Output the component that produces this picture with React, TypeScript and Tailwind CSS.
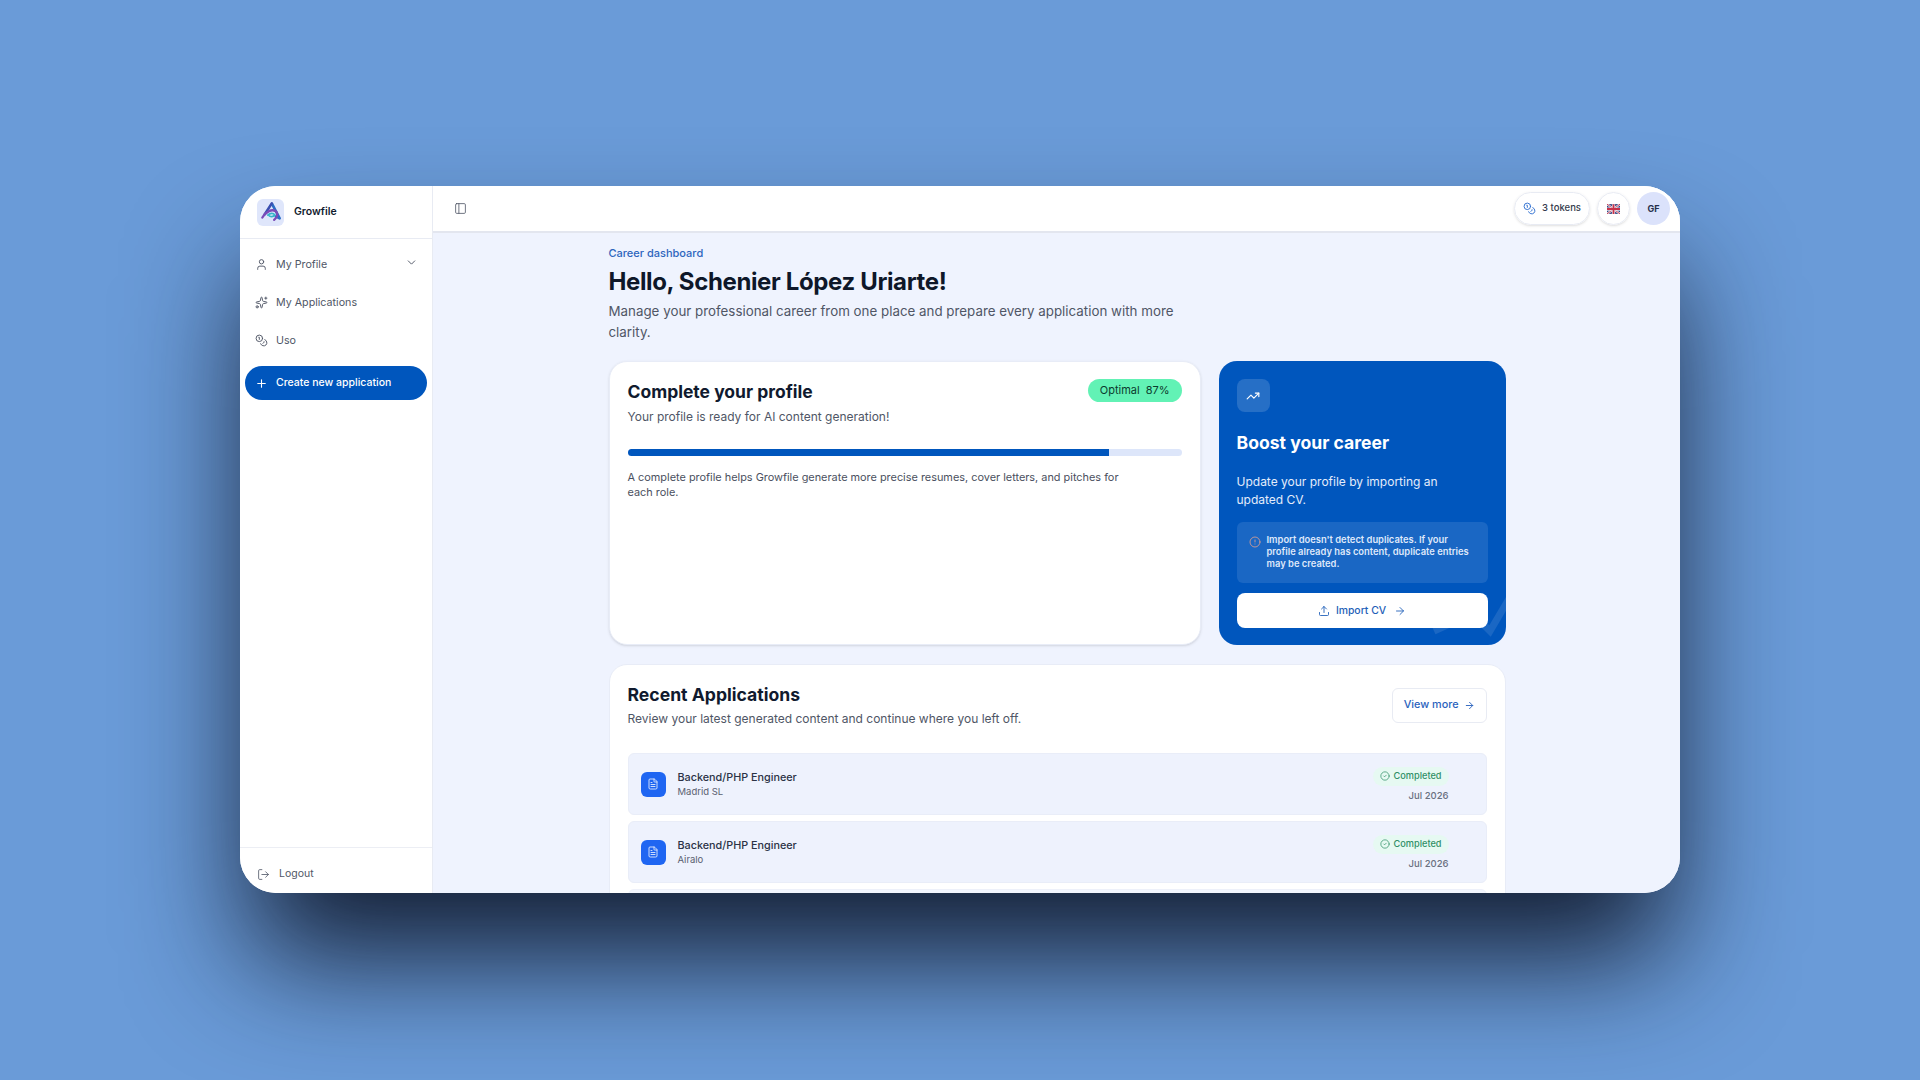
import { User, Sparkles, Coins, Plus, LogOut, ChevronDown, PanelLeft, TrendingUp, CircleAlert, Upload, ArrowRight, FileText, CircleCheck } from 'lucide-react';

const applications = [
  { role: 'Backend/PHP Engineer', company: 'Madrid SL', date: 'Jul 2026' },
  { role: 'Backend/PHP Engineer', company: 'Airalo', date: 'Jul 2026' },
];

function Logo() {
  return (
    <svg viewBox="0 0 28 28" className="w-[22px] h-[22px]" fill="none">
      <path d="M15 3 L25 22 L19 19" stroke="#2b6cc4" strokeWidth="3.4" strokeLinejoin="round" />
      <path d="M15 3 L6 17" stroke="#3a4fb0" strokeWidth="3.4" strokeLinecap="round" />
      <path d="M3 21 C8 13 15 10 20 13 C23 15 23 20 18 24" stroke="#7a4bb8" strokeWidth="3" strokeLinecap="round" />
      <path d="M10 18 C13 15 17 15 19 18 C17 20 14 20 12 19" stroke="#35b4c9" strokeWidth="2.2" strokeLinecap="round" />
    </svg>
  );
}

function UkFlag() {
  return (
    <svg viewBox="0 0 24 18" className="w-[13px] h-[10px]">
      <rect width="24" height="18" fill="#2b3f7e" />
      <path d="M0 0 L24 18 M24 0 L0 18" stroke="#e8e8f0" strokeWidth="4" />
      <path d="M0 0 L24 18 M24 0 L0 18" stroke="#c8324a" strokeWidth="1.6" />
      <path d="M12 0 V18 M0 9 H24" stroke="#e8e8f0" strokeWidth="6" />
      <path d="M12 0 V18 M0 9 H24" stroke="#c8324a" strokeWidth="3.4" />
    </svg>
  );
}

function Sidebar() {
  return (
    <aside className="w-[193px] shrink-0 bg-white border-r border-[#e8ebf3] flex flex-col">
      <div className="h-[53px] border-b border-[#e8ebf3] flex items-center pl-[17px] gap-[10px]">
        <div className="w-[27px] h-[27px] rounded-[6px] bg-[#dfe6fb] flex items-center justify-center">
          <Logo />
        </div>
        <span className="text-[10.5px] font-semibold text-[#111a2e]">Growfile</span>
      </div>
      <nav className="flex flex-col px-[5px] pt-[7px] text-[10.7px] text-[#4f5666]">
        <div className="relative h-[38px] flex items-center pl-[10px] gap-[8px]">
          <User className="w-[13px] h-[13px] -mt-[1px]" strokeWidth={1.75} />
          <span>My Profile</span>
          <ChevronDown className="absolute right-[9px] top-[10px] w-[13px] h-[13px]" strokeWidth={1.75} />
        </div>
        <div className="h-[38px] flex items-center pl-[10px] gap-[8px]">
          <Sparkles className="w-[13px] h-[13px] -mt-[1px]" strokeWidth={1.75} />
          <span>My Applications</span>
        </div>
        <div className="h-[38px] flex items-center pl-[10px] gap-[8px]">
          <Coins className="w-[13px] h-[13px] -mt-[1px]" strokeWidth={1.75} />
          <span>Uso</span>
        </div>
        <div className="mt-[6px] h-[34px] rounded-full bg-[#0056bd] text-white text-[10.5px] font-medium flex items-center pl-[10px] gap-[8px]">
          <Plus className="w-[13px] h-[13px]" strokeWidth={2} />
          <span>Create new application</span>
        </div>
      </nav>
      <div className="mt-auto h-[46px] pt-[7px] border-t border-[#eceef4] flex items-center pl-[17px] gap-[9px] text-[10.5px] text-[#4f5666]">
        <LogOut className="w-[13px] h-[13px]" strokeWidth={1.5} />
        <span>Logout</span>
      </div>
    </aside>
  );
}

function Topbar() {
  return (
    <header className="h-[47px] shrink-0 bg-white border-b-2 border-[#e3e6ef] flex items-center justify-between pl-[21px] pr-[10px]">
      <PanelLeft className="w-[13px] h-[13px] text-[#4f5666]" strokeWidth={1.5} />
      <div className="flex items-center gap-[7px]">
        <div className="h-[33px] rounded-full border border-[#e8ebf3] shadow-sm flex items-center px-[8px] gap-[6px] text-[9.5px] font-medium text-[#343b4c]">
          <Coins className="w-[13px] h-[13px] text-[#2f6fd0]" strokeWidth={1.75} />
          <span>3 tokens</span>
        </div>
        <div className="w-[33px] h-[33px] rounded-full border border-[#e8ebf3] shadow-sm flex items-center justify-center">
          <UkFlag />
        </div>
        <div className="w-[33px] h-[33px] rounded-full bg-[#dbe2fb] flex items-center justify-center text-[9px] font-bold text-[#27314d]">GF</div>
      </div>
    </header>
  );
}

function ProfileCard() {
  return (
    <section className="flex-1 h-[284px] rounded-[18px] bg-white border border-[#e8ecf7] shadow-sm px-[18px] pt-[18px]">
      <div className="flex items-start justify-between">
        <div>
          <h2 className="text-[17.5px] leading-[24px] font-bold text-[#101a2e]">Complete your profile</h2>
          <p className="mt-[4px] text-[12px] leading-[18px] text-[#4f5666]">Your profile is ready for AI content generation!</p>
        </div>
        <span className="h-[23px] mt-[-1px] rounded-full bg-[#62f2b5] px-[12px] flex items-center gap-[6px] text-[11px] text-[#0c3b2e]">
          <span>Optimal</span><span>87%</span>
        </span>
      </div>
      <div className="mt-[23px] h-[7px] rounded-full bg-[#dde6fa] overflow-hidden">
        <div className="h-full w-[87%] bg-[#0056bd]" />
      </div>
      <p className="mt-[14px] w-[510px] text-[10.9px] leading-[15px] text-[#4a5060]">
        A complete profile helps Growfile generate more precise resumes, cover letters, and pitches for each role.
      </p>
    </section>
  );
}

function BoostCard() {
  return (
    <section className="relative w-[287px] h-[284px] rounded-[18px] bg-[#0056bd] overflow-hidden px-[18px] pt-[18px] text-white">
      <svg viewBox="0 0 80 60" className="absolute right-[-6px] bottom-[2px] w-[80px] h-[60px] text-white/10" fill="none" stroke="currentColor" strokeWidth="7">
        <path d="M2 48 L24 38" />
        <path d="M48 38 L58 48 L78 14" />
      </svg>
      <div className="w-[33px] h-[33px] rounded-[8px] bg-white/15 flex items-center justify-center">
        <TrendingUp className="w-[14px] h-[14px]" strokeWidth={2} />
      </div>
      <h2 className="mt-[19px] text-[17.6px] leading-[24px] font-bold">Boost your career</h2>
      <p className="mt-[18px] text-[12px] leading-[18px] text-[#e4ecfb]">Update your profile by importing an updated CV.</p>
      <div className="mt-[13px] h-[61px] rounded-[6px] bg-white/10 flex gap-[6px] pl-[12px] pr-[10px] pt-[12px]">
        <CircleAlert className="w-[12px] h-[12px] mt-[2px] shrink-0 text-[#f0a58c]" strokeWidth={1.5} />
        <p className="text-[9.4px] leading-[12px] font-semibold text-[#dfe8fa]">Import doesn't detect duplicates. If your profile already has content, duplicate entries may be created.</p>
      </div>
      <button className="relative mt-[10px] w-full h-[35px] rounded-[8px] bg-white flex items-center justify-center gap-[6px] text-[10.4px] font-medium text-[#1f5fb8]">
        <Upload className="w-[12px] h-[12px]" strokeWidth={1.75} />
        <span>Import CV</span>
        <ArrowRight className="w-[12px] h-[12px] ml-[2px]" strokeWidth={1.75} />
      </button>
    </section>
  );
}

function RecentApplications() {
  return (
    <section className="mt-[19px] rounded-t-[18px] bg-white border border-[#e8ecf7] px-[18px] pt-[18px] pb-[18px]">
      <div className="flex items-start justify-between">
        <div>
          <h2 className="text-[17.6px] leading-[24px] font-bold text-[#101a2e]">Recent Applications</h2>
          <p className="mt-[3px] text-[12px] leading-[18px] text-[#4f5666]">Review your latest generated content and continue where you left off.</p>
        </div>
        <button className="mt-[5px] h-[35px] rounded-[6px] border border-[#e8ebf3] px-[11px] flex items-center gap-[5px] text-[10.8px] font-medium text-[#2a62bd]">
          <span>View more</span>
          <ArrowRight className="w-[11px] h-[11px]" strokeWidth={2} />
        </button>
      </div>
      <div className="mt-[25px] flex flex-col gap-[6px]">
        {applications.map((a, i) => (
          <div key={i} className="h-[62px] shrink-0 rounded-[6px] bg-[#eef2fd] border border-[#e9edf8] flex items-center justify-between pl-[12px] pr-[37px]">
            <div className="flex items-center gap-[12px]">
              <div className="w-[25px] h-[25px] rounded-[6px] bg-[#1f66f2] flex items-center justify-center">
                <FileText className="w-[12px] h-[12px] text-[#e8effd]" strokeWidth={1.75} />
              </div>
              <div>
                <div className="text-[10.8px] leading-[14px] font-medium text-[#2b3346]">{a.role}</div>
                <div className="text-[9.5px] leading-[13px] text-[#5a6070]">{a.company}</div>
              </div>
            </div>
            <div className="flex flex-col items-end gap-[3px]">
              <span className="h-[19px] rounded-full bg-[#e6f9f2] px-[7px] flex items-center gap-[4px] text-[9.2px] font-medium text-[#2f8f66]">
                <CircleCheck className="w-[10px] h-[10px]" strokeWidth={1.75} />
                <span>Completed</span>
              </span>
              <span className="text-[9.5px] leading-[13px] font-medium text-[#6a7080]">{a.date}</span>
            </div>
          </div>
        ))}
        <div className="h-[62px] shrink-0 rounded-[6px] bg-[#f3f6fe] border border-[#eef1fa]" />
      </div>
    </section>
  );
}

export default function App() {
  return (
    <div className="h-screen overflow-hidden bg-[#6a9bd8] flex justify-center items-start pt-[186px]" style={{ fontFamily: 'Inter, sans-serif' }}>
      <div className="w-[1440px] h-[707px] rounded-[36px] overflow-hidden bg-white flex shadow-[0_75px_120px_-10px_rgba(15,23,42,0.95)]">
        <Sidebar />
        <div className="flex-1 min-w-0 flex flex-col bg-[#eff3fe]">
          <Topbar />
          <main className="flex-1 min-h-0 overflow-hidden pl-[1px]">
            <div className="w-[897px] mx-auto pt-[13px]">
              <div className="text-[11px] leading-[14px] font-medium text-[#2d65bd]">Career dashboard</div>
              <h1 className="mt-[6px] text-[24px] leading-[32px] font-bold tracking-[-0.37px] text-[#0e1729]">Hello, Schenier López Uriarte!</h1>
              <p className="mt-[3px] w-[590px] text-[13.35px] leading-[21px] text-[#4f5666]">Manage your professional career from one place and prepare every application with more clarity.</p>
              <div className="mt-[18px] flex gap-[18px]">
                <ProfileCard />
                <BoostCard />
              </div>
              <RecentApplications />
            </div>
          </main>
        </div>
      </div>
    </div>
  );
}
